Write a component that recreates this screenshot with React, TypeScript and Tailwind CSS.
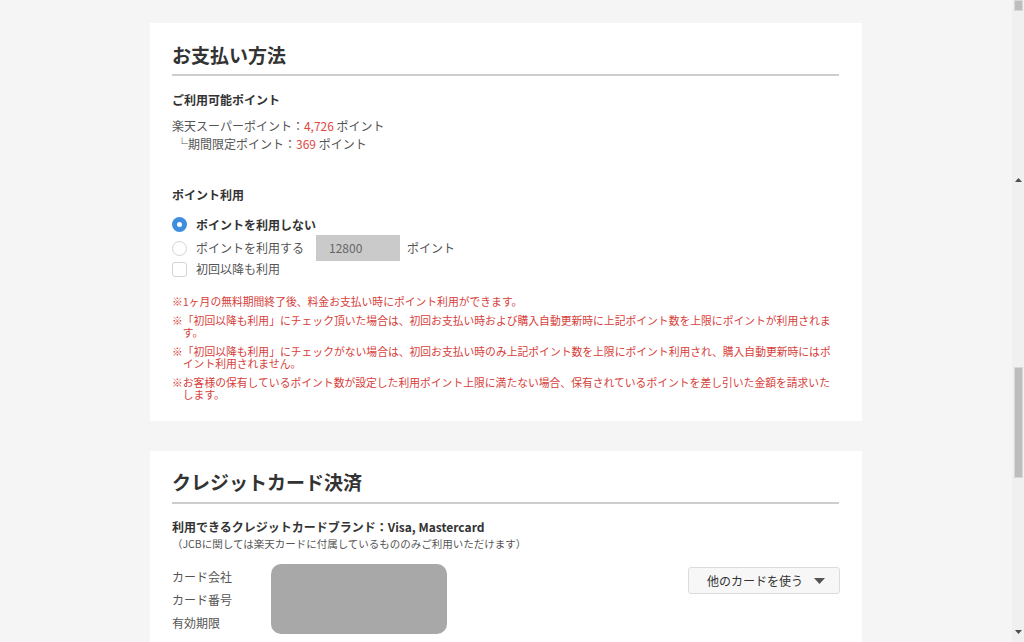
import React from 'react'

const notes = [
  '※1ヶ月の無料期間終了後、料金お支払い時にポイント利用ができます。',
  '※「初回以降も利用」にチェック頂いた場合は、初回お支払い時および購入自動更新時に上記ポイント数を上限にポイントが利用されます。',
  '※「初回以降も利用」にチェックがない場合は、初回お支払い時のみ上記ポイント数を上限にポイント利用され、購入自動更新時にはポイント利用されません。',
  '※お客様の保有しているポイント数が設定した利用ポイント上限に満たない場合、保有されているポイントを差し引いた金額を請求いたします。',
]

function Radio({ checked }: { checked?: boolean }) {
  return checked ? (
    <span className="w-[15px] h-[15px] rounded-full bg-[#3d8ede] flex items-center justify-center shrink-0">
      <span className="w-[5px] h-[5px] rounded-full bg-white" />
    </span>
  ) : (
    <span className="w-[15px] h-[15px] rounded-full border border-[#d4d4d4] bg-white shrink-0" />
  )
}

function Scrollbar() {
  return (
    <div className="w-[12px] h-full bg-[#f0f0f0] flex flex-col items-center shrink-0">
      <div className="w-[9px] h-[11px] bg-[#bdbdbd] border border-[#d8d8d8]" />
      <svg className="mt-[167px]" width="7" height="4" viewBox="0 0 7 4">
        <path d="M3.5 0L7 4H0z" fill="#505050" />
      </svg>
      <div className="mt-[185px] w-[9px] h-[111px] bg-[#bdbdbd] border border-[#d8d8d8]" />
      <svg className="mt-[152px]" width="7" height="4" viewBox="0 0 7 4">
        <path d="M0 0H7L3.5 4z" fill="#505050" />
      </svg>
    </div>
  )
}

export default function App() {
  return (
    <div className="flex h-[642px] overflow-hidden bg-[#f5f5f5] text-[#333] font-['Noto_Sans_CJK_JP',sans-serif]">
      <main className="flex-1 flex flex-col items-center pt-[23px] gap-[30px]">
        {/* お支払い方法 */}
        <section className="w-[712px] bg-white px-[22px] pt-[18px] pb-[21px] shrink-0">
          <h2 className="text-[19px] leading-[28px] font-bold pb-[5px] border-b-2 border-[#cdcdcd] mr-px">
            お支払い方法
          </h2>

          <h3 className="mt-[15px] text-[12px] leading-[18px] font-bold">ご利用可能ポイント</h3>
          <div className="mt-[8px] text-[12px] leading-[18px] text-[#555]">
            <p>
              楽天スーパーポイント：<span className="text-[#e0483f]">4,726</span> ポイント
            </p>
            <p className="pl-[4px]">
              └期間限定ポイント：<span className="text-[#e0483f]">369</span> ポイント
            </p>
          </div>

          <h3 className="mt-[33px] text-[12px] leading-[18px] font-bold">ポイント利用</h3>
          <div className="mt-[10px] text-[12px]">
            <label className="flex items-center gap-[9px] h-[21px] font-bold">
              <Radio checked />
              ポイントを利用しない
            </label>
            <label className="flex items-center gap-[9px] h-[26px] text-[#555]">
              <Radio />
              <span className="w-[111px]">ポイントを利用する</span>
              <span className="w-[84px] h-[26px] bg-[#cacaca] text-[#666] flex items-center pl-[13px]">12800</span>
              <span className="-ml-[2px]">ポイント</span>
            </label>
            <label className="flex items-center gap-[9px] h-[16px] text-[#555]">
              <span className="w-[15px] h-[15px] rounded-[3px] border border-[#d4d4d4] bg-white shrink-0" />
              初回以降も利用
            </label>
          </div>

          <div className="mt-[18px] text-[10.8px] leading-[12px] text-[#d6403a] flex flex-col gap-[7px]">
            {notes.map(n => (
              <p key={n} className="pl-[1em] -indent-[1em]">
                {n}
              </p>
            ))}
          </div>
        </section>

        {/* クレジットカード決済 */}
        <section className="w-[712px] bg-white px-[22px] pt-[17px] pb-[30px] shrink-0">
          <h2 className="text-[19px] leading-[28px] font-bold pb-[6px] border-b-2 border-[#cdcdcd] mr-px">
            クレジットカード決済
          </h2>
          <p className="mt-[14px] text-[12px] leading-[18px] font-bold">
            利用できるクレジットカードブランド：Visa, Mastercard
          </p>
          <p className="mt-[1px] text-[10.5px] leading-[14px] text-[#555]">
            （JCBに関しては楽天カードに付属しているもののみご利用いただけます）
          </p>

          <div className="mt-[13px] flex items-start">
            <div className="w-[99px] pt-[1px] text-[12px] leading-[23px] text-[#555]">
              <p>カード会社</p>
              <p>カード番号</p>
              <p>有効期限</p>
            </div>
            <div className="w-[176px] h-[70px] rounded-[10px] bg-[#a8a8a8]" />
            <button className="ml-auto mt-[3px] w-[152px] h-[27px] rounded-[3px] border border-[#dcdcdc] bg-[#f7f7f7] text-[12px] text-[#333] flex items-center pl-[18px] pr-[14px]">
              <span>他のカードを使う</span>
              <svg className="ml-auto" width="11" height="6" viewBox="0 0 11 6">
                <path d="M0 0H11L5.5 6z" fill="#555" />
              </svg>
            </button>
          </div>
        </section>
      </main>
      <Scrollbar />
    </div>
  )
}
